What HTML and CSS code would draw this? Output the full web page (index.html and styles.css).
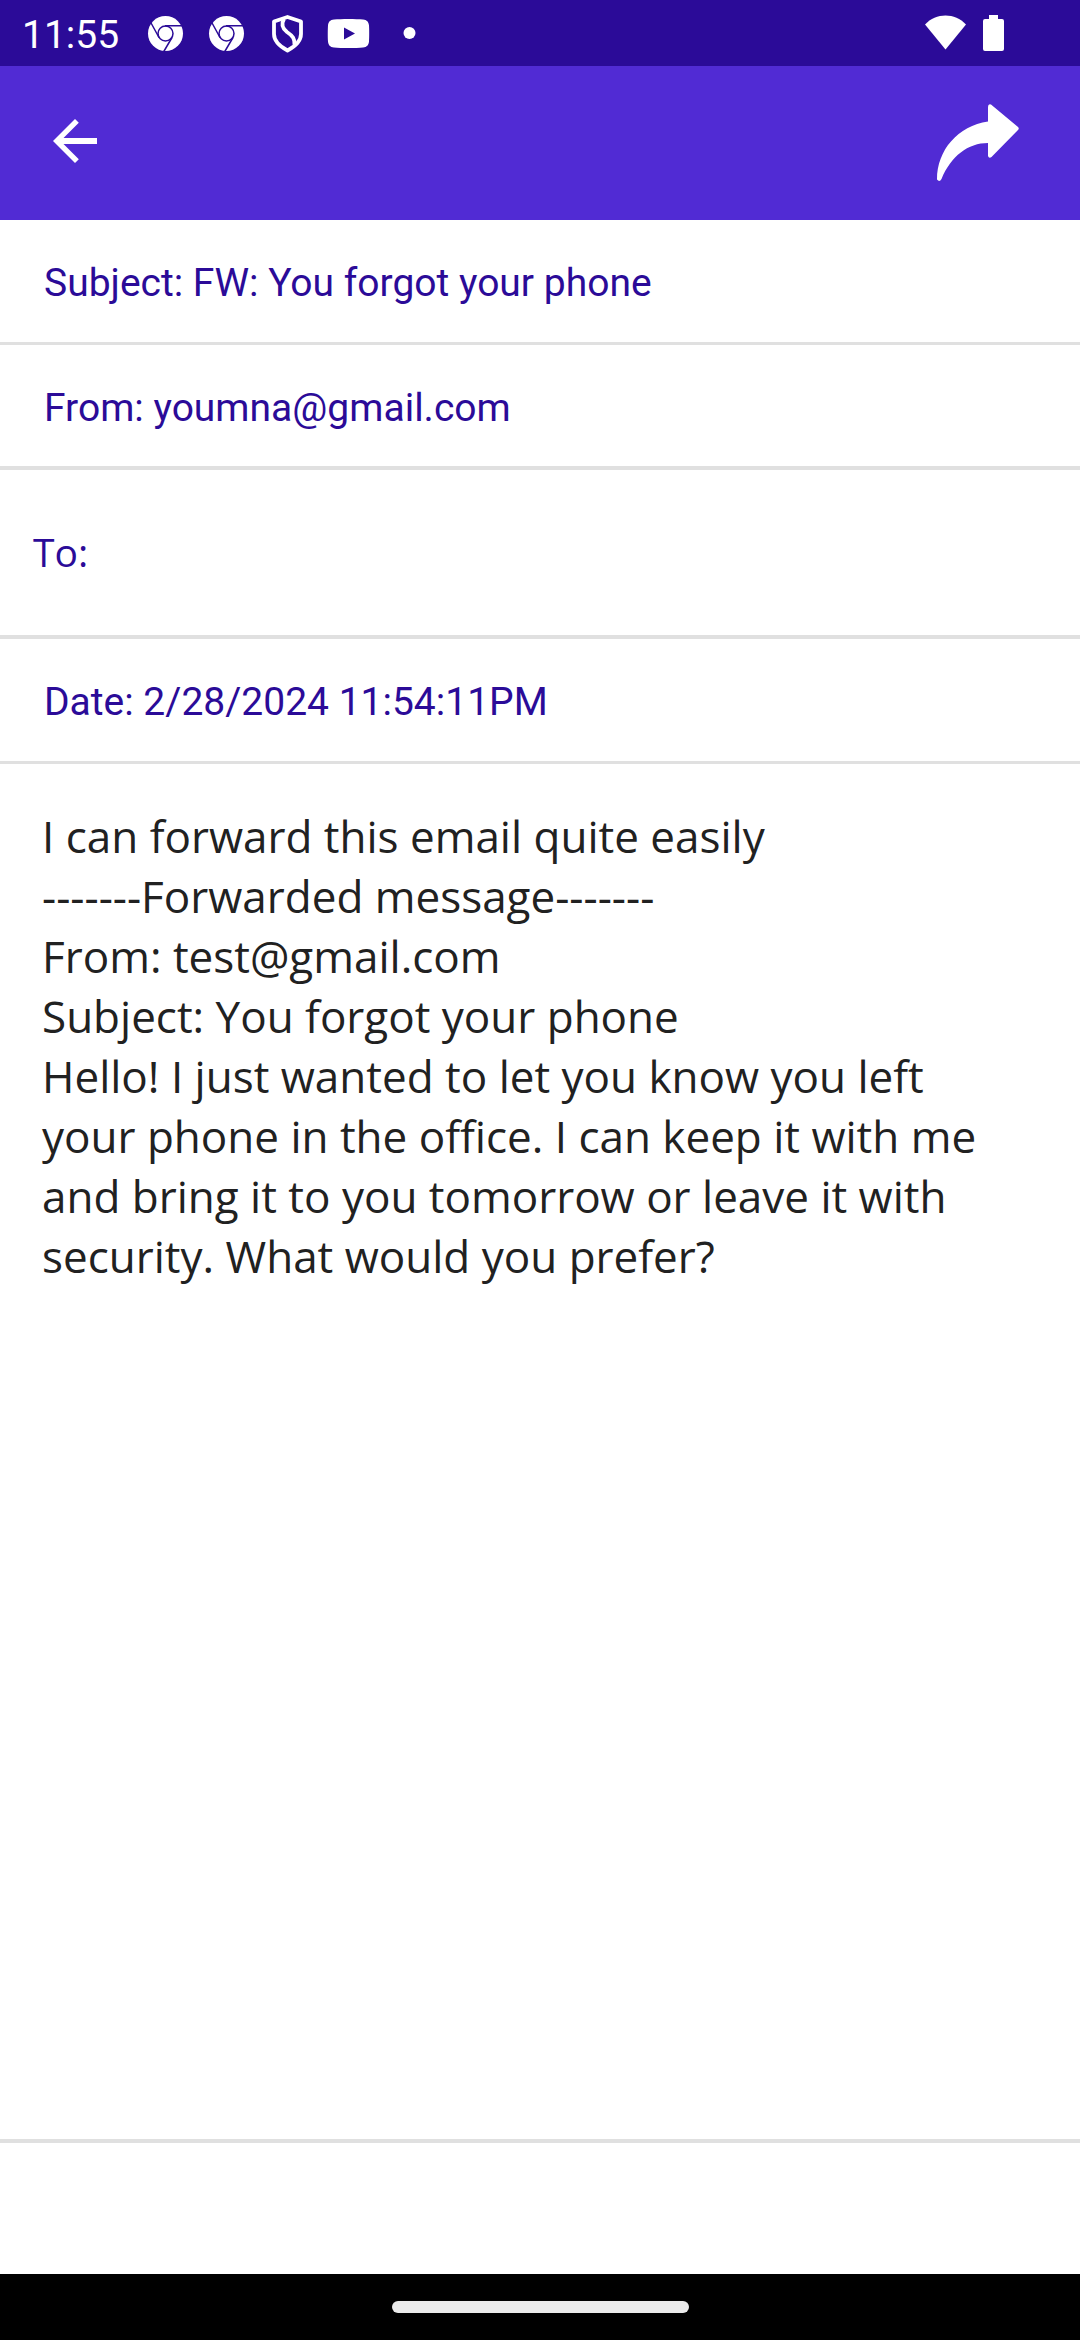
FILE: index.html
```html
<!DOCTYPE html>
<html lang="en">
<head>
<meta charset="utf-8">
<meta name="viewport" content="width=device-width">
<title>You forgot your phone</title>
<link rel="stylesheet" href="styles.css">
</head>
<body class="screen">
<div class="status-bar">
  <time class="clock">11:55</time>
  <div class="notifications">
    <svg class="status-icon" viewBox="0 0 41 41" aria-hidden="true"><circle cx="20.500" cy="20.500" r="17.500" fill="#fff"/><g fill="none" stroke="#2b0b98" stroke-width="1.500"><circle cx="20.500" cy="20.500" r="7.500"/><path d="M20 12.700h18M14 24.500 5.500 9M27 24.500 18.500 39"/></g></svg>
    <svg class="status-icon" viewBox="0 0 41 41" aria-hidden="true"><circle cx="20.500" cy="20.500" r="17.500" fill="#fff"/><g fill="none" stroke="#2b0b98" stroke-width="1.500"><circle cx="20.500" cy="20.500" r="7.500"/><path d="M20 12.700h18M14 24.500 5.500 9M27 24.500 18.500 39"/></g></svg>
    <svg class="status-icon" viewBox="0 0 41 41" aria-hidden="true"><g fill="none" stroke="#fff" stroke-width="3.800" stroke-linejoin="round"><path d="M20.500 4 34 8.500v12.500c0 7-6 12.500-13.500 16.500C13 33.500 7 28 7 21V8.500z"/><path d="M17 6c-3 5-2 9 3 13 6 4 8 7 7.500 13"/></g></svg>
    <svg class="status-icon" viewBox="0 0 41 41" aria-hidden="true"><path fill="#fff" fill-rule="evenodd" d="M6 6.500C13 5.800 28 5.800 35 6.500c4 .4 5.700 2.500 6 6 .3 4 .3 12 0 16-.3 3.500-2 5.600-6 6-7 .7-22 .7-29 0-4-.4-5.700-2.500-6-6-.3-4-.3-12 0-16 .3-3.500 2-5.600 6-6zM16 14.500v12l11-6z"/></svg>
    <svg class="status-icon" viewBox="0 0 41 41" aria-hidden="true"><circle cx="20.500" cy="20" r="6" fill="#fff"/></svg>
  </div>
  <svg class="status-icon" viewBox="0 0 41 41" aria-hidden="true"><path fill="#fff" d="M0 11.500C11-.500 30-.500 41 11.500L20.500 36.500z"/></svg>
  <svg class="battery-icon" viewBox="0 0 21 36" aria-hidden="true"><path fill="#fff" d="M6 0h9v4h4q2 0 2 2v28q0 2-2 2H2q-2 0-2-2V6q0-2 2-2h4z"/></svg>
</div>
<header class="app-bar">
  <button class="back" type="button" aria-label="Back"><svg class="back-icon" viewBox="0 0 44 44"><path fill="#fff" d="M44 19v6H10.500l15.300 15.300L22 44 0 22 22 0l3.800 3.700L10.500 19z"/></svg></button>
  <button class="forward" type="button" aria-label="Forward"><svg class="forward-icon" viewBox="0 0 82 78"><path fill="#fff" d="M51 17.500V3q0-3.500 3-2.500L81 23q1.500 1.500 0 3L54.500 53Q52 55 51 52V39C31 39 14 52 4.500 75q-2 3.500-4.500.5C0 46 21 22 51 17.500z"/></svg></button>
</header>
<main class="mail">
  <div class="field">Subject: FW: You forgot your phone</div>
  <div class="field field-strong">From: youmna@gmail.com</div>
  <div class="field field-strong field-to">To:</div>
  <div class="field">Date: 2/28/2024 11:54:11PM</div>
  <article class="message">I can forward this email quite easily<br>-------Forwarded message-------<br>From: test@gmail.com<br>Subject: You forgot your phone<br>Hello! I just wanted to let you know you left your phone in the office. I can keep it with me and bring it to you tomorrow or leave it with security. What would you prefer?</article>
</main>
<footer class="footer"></footer>
<div class="nav-bar"><div class="handle"></div></div>
</body>
</html>
```
FILE: styles.css
```css
* { box-sizing: border-box; }

.screen {
  margin: 0;
  min-height: 100vh;
  display: flex;
  flex-direction: column;
  background: #fff;
  font-family: Roboto, sans-serif;
  font-size: 39px;
  color: #2b0b98;
}

.status-bar {
  display: flex;
  align-items: center;
  height: 66px;
  padding: 0 76px 0 22px;
  background: #2b0b98;
  color: #fff;
}

.clock { width: 123px; line-height: 48px; padding-top: 3px; }
.notifications { display: flex; flex: 1; gap: 20px; }
.status-icon { width: 41px; height: 41px; overflow: visible; }
.battery-icon { width: 21px; height: 36px; margin-left: 17px; }

.app-bar {
  display: flex;
  align-items: center;
  justify-content: space-between;
  height: 154px;
  padding: 0 61px 0 53px;
  background: #512bd4;
}

.back, .forward {
  display: flex;
  padding: 0;
  border: 0;
  background: none;
}

.back { padding-bottom: 4px; }
.back-icon { width: 44px; height: 44px; }
.forward-icon { width: 82px; height: 78px; }

.mail { display: flex; flex: 1; flex-direction: column; }

.field {
  padding: 40px 44px 36px;
  border-bottom: 3px solid #e0e0e0;
  line-height: 46px;
}

.field-strong { padding-bottom: 35px; border-bottom-width: 4px; }
.field-to { padding: 59px 33px 60px; font-family: "Open Sans", sans-serif; }

.message {
  padding: 42px 90px 42px 42px;
  color: #212121;
  font: 44px/60px "Open Sans", sans-serif;
}

.footer { height: 135px; border-top: 4px solid #e0e0e0; }

.nav-bar {
  display: flex;
  align-items: center;
  justify-content: center;
  height: 66px;
  background: #000;
}

.handle {
  width: 297px;
  height: 12px;
  border-radius: 6px;
  background: #ebebeb;
}
```
